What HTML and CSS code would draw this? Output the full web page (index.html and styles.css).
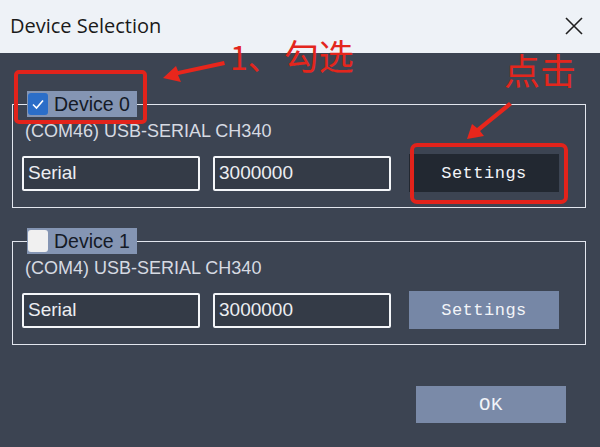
FILE: index.html
```html
<!DOCTYPE html>
<html>
<head>
<meta charset="utf-8">
<link rel="stylesheet" href="styles.css">
</head>
<body>
<div class="dialog">
  <div class="titlebar">
    <span class="title">Device Selection</span>
    <svg class="close" width="20" height="20" viewBox="0 0 20 20"><path d="M2 2 L18 18 M18 2 L2 18" stroke="#1f1f1f" stroke-width="1.6" fill="none"/></svg>
  </div>
  <div class="body">
    <fieldset class="group">
      <legend class="legend">
        <span class="check checked"><svg width="14" height="12" viewBox="0 0 14 12"><path d="M2 6.5 L5.5 10 L12 2.5" stroke="#fff" stroke-width="1.6" fill="none"/></svg></span>
        <span class="legend-text">Device 0</span>
      </legend>
      <div class="desc">(COM46) USB-SERIAL CH340</div>
      <div class="row">
        <div class="field">Serial</div>
        <div class="field">3000000</div>
        <button class="btn btn-dark">Settings</button>
      </div>
    </fieldset>
    <fieldset class="group group-2">
      <legend class="legend">
        <span class="check"></span>
        <span class="legend-text">Device 1</span>
      </legend>
      <div class="desc">(COM4) USB-SERIAL CH340</div>
      <div class="row">
        <div class="field">Serial</div>
        <div class="field">3000000</div>
        <button class="btn">Settings</button>
      </div>
    </fieldset>
    <div class="footer">
      <button class="btn btn-ok">OK</button>
    </div>
  </div>

  <div class="mark mark-box1"></div>
  <div class="mark mark-box2"></div>
  <div class="note note-1"><span class="num">1、</span><span class="cjk">勾选</span></div>
  <div class="note note-2">点击</div>
  <svg class="arrow" width="600" height="447" viewBox="0 0 600 447">
    <polygon points="224,61 225,65 178,75 181,82 163,78 176,66 178,71" fill="#e8261c"/>
    <polygon points="509,102 512,105 480,131 484,136 467,139 472,124 477,128" fill="#e8261c"/>
  </svg>
</div>
</body>
</html>
```

FILE: styles.css
```css
* { box-sizing: border-box; }
html, body { margin: 0; padding: 0; }
body { width: 600px; height: 447px; overflow: hidden; background: #3c4452; }

.dialog { position: relative; width: 600px; height: 447px; font-family: "Liberation Sans", Arial, sans-serif; }

.titlebar {
  height: 53px;
  background: #eef2f7;
  display: flex;
  align-items: center;
  justify-content: space-between;
  padding: 0 16px 0 10px;
}
.title { font-family: "Open Sans", "Liberation Sans", sans-serif; font-size: 20px; color: #1a1a1a; margin-top: -2px; }
.close { margin-top: -2px; }

.body {
  height: 394px;
  background: #3c4452;
  padding: 38px 14px 0 12px;
  display: flex;
  flex-direction: column;
}

.group {
  margin: 0;
  border: 1px solid #e2e6ee;
  padding: 0 25px 15px 9px;
  min-width: 0;
}
.group-2 { margin-top: 20px; }

.legend {
  margin-left: 5px;
  padding: 0 4px 0 1px;
  width: 110px;
  height: 26px;
  background: #8495b3;
  display: flex;
  align-items: center;
  gap: 6px;
}
.check {
  width: 20px;
  height: 22px;
  border-radius: 3px;
  background: #f0f0f0;
  display: flex;
  align-items: center;
  justify-content: center;
}
.check.checked { background: #2b6ec8; }
.legend-text { font-size: 19.5px; color: #141a26; font-family: "Liberation Sans", sans-serif; }

.desc {
  font-size: 18px;
  color: #d6dae2;
  line-height: 22px;
  margin: 3px 0 0 3px;
}

.row {
  display: flex;
  align-items: center;
  margin-top: 12px;
}
.field {
  width: 178px;
  height: 35px;
  border: 2px solid #f4f6f9;
  border-radius: 2px;
  background: #343b47;
  color: #eceef2;
  font-size: 19px;
  padding-left: 4px;
  display: flex;
  align-items: center;
  margin-right: 13px;
}
.field + .field { margin-right: 18px; }

.btn {
  width: 150px;
  height: 38px;
  border: none;
  background: #7687a6;
  color: #f2f4f8;
  font-family: "Liberation Mono", "Courier New", monospace;
  font-size: 17px;
  letter-spacing: 0.5px;
  padding: 0;
}
.btn-dark { background: #222831; }

.footer {
  display: flex;
  justify-content: flex-end;
  padding-right: 20px;
  margin-top: 41px;
}
.btn-ok { width: 150px; height: 37px; background: #7a8aa8; font-size: 19px; }

.mark {
  position: absolute;
  border: 4px solid #e2231b;
  border-radius: 5px;
}
.mark-box1 { left: 14px; top: 70px; width: 133px; height: 54px; }
.mark-box2 { left: 410px; top: 143px; width: 158px; height: 61px; border-radius: 7px; }

.note {
  position: absolute;
  color: #e3261d;
  font-family: "Noto Sans CJK SC", sans-serif;
  line-height: 1;
}
.note-1 { left: 230px; top: 37px; font-size: 32px; display: flex; align-items: baseline; }
.note-1 .cjk { font-size: 35px; margin-left: 4px; }
.note-2 { left: 504px; top: 51px; font-size: 36px; }

.arrow { position: absolute; left: 0; top: 0; pointer-events: none; }
```
